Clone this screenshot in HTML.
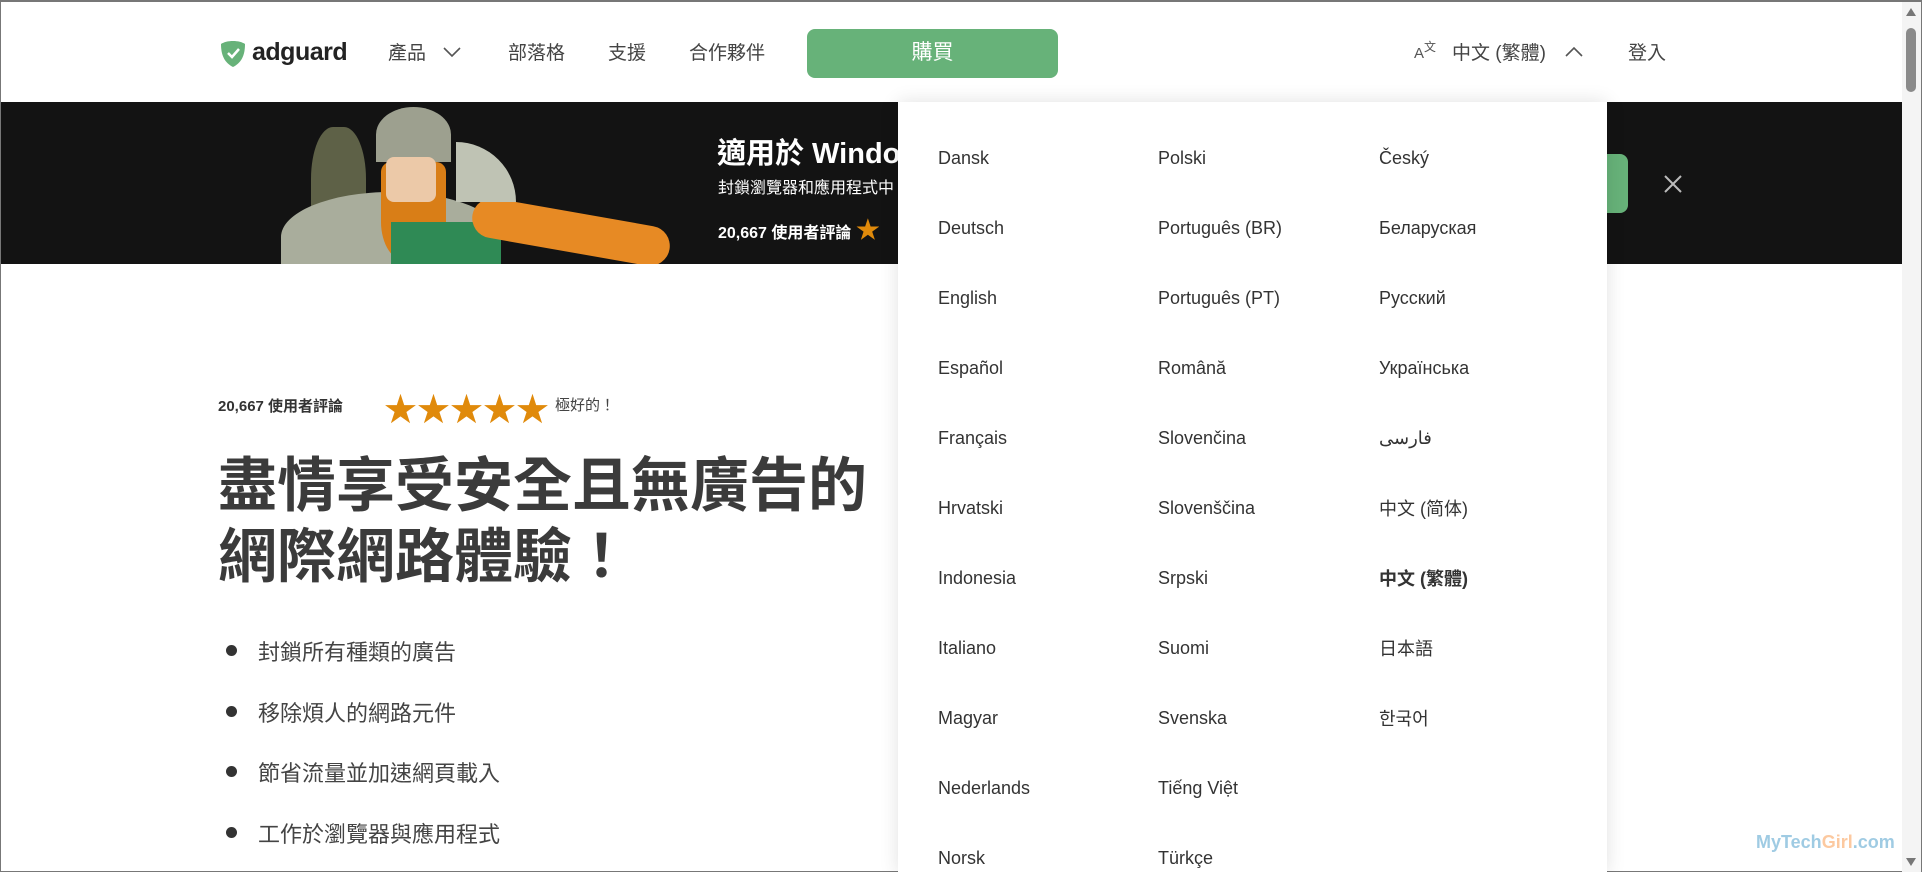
<!DOCTYPE html>
<html><head><meta charset="utf-8">
<style>
*{margin:0;padding:0;box-sizing:border-box}
html,body{width:1922px;height:872px;overflow:hidden;background:#fff}
body{font-family:"Liberation Sans","Noto Sans CJK TC",sans-serif;color:#3a3a3a;position:relative;border:1px solid #777;border-top:2px solid #777}
.abs{position:absolute;white-space:nowrap}
.nav{font-size:19px;color:#444;top:36px}
.banner{position:absolute;left:0;top:100px;width:1902px;height:162px;background:#131313;overflow:hidden}
.dd{position:absolute;left:897px;top:100px;width:709px;height:772px;background:#fff;box-shadow:0 0 18px rgba(0,0,0,.12)}
.dd span{position:absolute;font-size:18px;color:#333;white-space:nowrap}
.dd span.c{margin-top:-3px}
.scroll{position:absolute;right:0;top:0;width:19px;height:870px;background:#f4f4f4}
.bul{position:absolute;left:225px;font-size:22px;color:#444}
.bul:before{content:"";position:absolute;left:0;top:10px;width:11px;height:11px;border-radius:50%;background:#333}
.bul span{margin-left:32px}
</style></head><body>

<svg class="abs" style="left:219px;top:38px" width="26" height="28" viewBox="0 0 26 28"><path d="M13 1 C8 1 4 2 1 4 C1 16 5 23 13 27 C21 23 25 16 25 4 C22 2 18 1 13 1Z" fill="#67b279"/><path d="M8 13 l4 4 l7-8" stroke="#fff" stroke-width="2.5" fill="none"/></svg>
<div class="abs" style="left:251px;top:36px;font-size:25px;font-weight:bold;color:#232323;letter-spacing:-0.5px">adguard</div>
<div class="abs nav" style="left:387px">產品</div>
<svg class="abs" style="left:442px;top:45px" width="18" height="11"><path d="M1 1 L9 9 L17 1" stroke="#555" stroke-width="1.6" fill="none"/></svg>
<div class="abs nav" style="left:507px">部落格</div>
<div class="abs nav" style="left:607px">支援</div>
<div class="abs nav" style="left:688px">合作夥伴</div>
<div class="abs" style="left:806px;top:27px;width:251px;height:49px;background:#67b279;border-radius:8px;color:#fff;font-size:21px;text-align:center;line-height:47px">購買</div>
<div class="abs" style="left:1413px;top:43px;font-size:15px;color:#555">A</div>
<div class="abs" style="left:1423px;top:36px;font-size:12px;color:#555">文</div>
<div class="abs nav" style="left:1451px">中文 (繁體)</div>
<svg class="abs" style="left:1564px;top:44px" width="18" height="11"><path d="M1 10 L9 2 L17 10" stroke="#555" stroke-width="1.6" fill="none"/></svg>
<div class="abs nav" style="left:1627px">登入</div>

<div class="banner">
 <div style="position:absolute;left:280px;top:0;width:400px;height:162px">
  <div style="position:absolute;left:30px;top:25px;width:55px;height:130px;background:#5e6147;border-radius:40% 40% 20% 20%"></div>
  <div style="position:absolute;left:0;top:90px;width:220px;height:90px;background:#a9ad9c;border-radius:50% 50% 0 0"></div>
  <div style="position:absolute;left:95px;top:5px;width:75px;height:55px;background:#9da08f;border-radius:50% 50% 0 0"></div>
  <div style="position:absolute;left:100px;top:60px;width:65px;height:100px;background:#d97e17;border-radius:10px 10px 40% 40%"></div>
  <div style="position:absolute;left:105px;top:55px;width:50px;height:45px;background:#ecc9a8;border-radius:8px"></div>
  <div style="position:absolute;left:110px;top:120px;width:110px;height:50px;background:#2f8a55"></div>
  <div style="position:absolute;left:190px;top:110px;width:200px;height:40px;background:#e78a24;border-radius:20px;transform:rotate(10deg)"></div>
  <div style="position:absolute;left:175px;top:40px;width:60px;height:60px;background:#bfc3b4;border-radius:0 60px 0 0"></div>
 </div>
 <div style="position:absolute;left:716px;top:28px;font-size:29px;font-weight:bold;color:#fff">適用於 Windows</div>
 <div style="position:absolute;left:717px;top:72px;font-size:16px;color:#fff">封鎖瀏覽器和應用程式中</div>
 <div style="position:absolute;left:717px;top:108px;font-size:16px;font-weight:bold;color:#fff">20,667 使用者評論 <span style="color:#e08a0b;font-size:24px">★</span></div>
 <div style="position:absolute;left:1580px;top:52px;width:47px;height:59px;background:#67b279;border-radius:0 8px 8px 0"></div>
 <svg style="position:absolute;left:1663px;top:73px" width="18" height="18"><path d="M1 1L17 17M17 1L1 17" stroke="#bbb" stroke-width="2"/></svg>
</div>

<div class="abs" style="left:217px;top:393px;font-size:15px;font-weight:bold;color:#333">20,667 使用者評論</div>
<div class="abs" style="left:383px;top:381px;font-size:33px;color:#e08a0b;letter-spacing:0px">★★★★★</div>
<div class="abs" style="left:554px;top:392px;font-size:15px;color:#444">極好的！</div>
<div class="abs" style="left:217px;top:449px;font-size:59px;font-weight:bold;color:#3b3b3b;line-height:71px">盡情享受安全且無廣告的<br>網際網路體驗！</div>
<div class="bul" style="top:633px"><span>封鎖所有種類的廣告</span></div>
<div class="bul" style="top:694px"><span>移除煩人的網路元件</span></div>
<div class="bul" style="top:754px"><span>節省流量並加速網頁載入</span></div>
<div class="bul" style="top:815px"><span>工作於瀏覽器與應用程式</span></div>

<div class="dd">
 <span style="left:40px;top:46px">Dansk</span><span style="left:260px;top:46px">Polski</span><span style="left:481px;top:46px">Český</span>
 <span style="left:40px;top:116px">Deutsch</span><span style="left:260px;top:116px">Português (BR)</span><span style="left:481px;top:116px">Беларуская</span>
 <span style="left:40px;top:186px">English</span><span style="left:260px;top:186px">Português (PT)</span><span style="left:481px;top:186px">Русский</span>
 <span style="left:40px;top:256px">Español</span><span style="left:260px;top:256px">Română</span><span style="left:481px;top:256px">Українська</span>
 <span style="left:40px;top:326px">Français</span><span style="left:260px;top:326px">Slovenčina</span><span style="left:481px;top:326px">فارسی</span>
 <span style="left:40px;top:396px">Hrvatski</span><span style="left:260px;top:396px">Slovenščina</span><span class="c" style="left:481px;top:396px">中文 (简体)</span>
 <span style="left:40px;top:466px">Indonesia</span><span style="left:260px;top:466px">Srpski</span><span class="c" style="left:481px;top:466px;font-weight:bold">中文 (繁體)</span>
 <span style="left:40px;top:536px">Italiano</span><span style="left:260px;top:536px">Suomi</span><span class="c" style="left:481px;top:536px">日本語</span>
 <span style="left:40px;top:606px">Magyar</span><span style="left:260px;top:606px">Svenska</span><span class="c" style="left:481px;top:606px">한국어</span>
 <span style="left:40px;top:676px">Nederlands</span><span style="left:260px;top:676px">Tiếng Việt</span>
 <span style="left:40px;top:746px">Norsk</span><span style="left:260px;top:746px">Türkçe</span>
</div>

<div class="abs" style="left:1755px;top:830px;font-size:18px;font-weight:bold;color:#9fcbe3">MyTech<span style="color:#fcc9a0">Girl</span>.com</div>

<div class="scroll">
 <svg style="position:absolute;left:4px;top:6px" width="10" height="8"><path d="M5 0L10 8H0Z" fill="#777"/></svg>
 <div style="position:absolute;left:4px;top:26px;width:10px;height:64px;background:#8a8a8a;border-radius:5px"></div>
 <svg style="position:absolute;left:4px;top:856px" width="10" height="8"><path d="M0 0H10L5 8Z" fill="#777"/></svg>
</div>
</body></html>
